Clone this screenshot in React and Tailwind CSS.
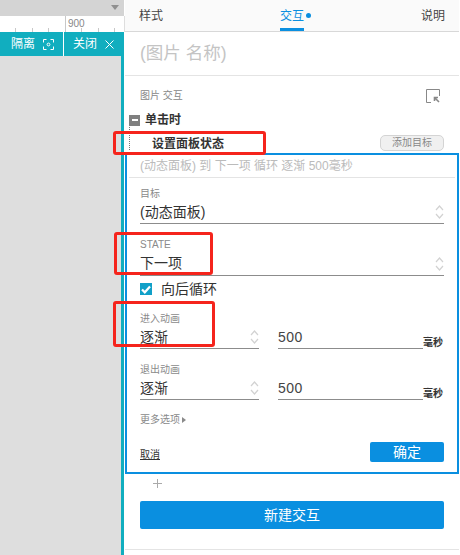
const Updown = ({ className = "" }) => (
  <svg width="9" height="16" viewBox="0 0 9 16" className={className} fill="none" stroke="#d2d2d2" strokeWidth="1.2">
    <path d="M1 6l3.5-4L8 6" />
    <path d="M1 10l3.5 4L8 10" />
  </svg>
);
const Label = ({ children, className = "" }) => (
  <div className={`text-[10px] leading-[14px] text-[#8a8a8a] ${className}`}>{children}</div>
);
const Select = ({ children, className = "", h = "h-[24px]" }) => (
  <div className={`${h} flex items-center justify-between border-b border-[#8c8c8c] text-[14px] text-[#333] ${className}`}>
    <span>{children}</span>
    <Updown />
  </div>
);
const AnimRow = () => (
  <div className="flex items-end">
    <Select className="w-[119px]" h="h-[23px]">逐渐</Select>
    <div className="w-[145px] ml-[19px] h-[23px] border-b border-[#8c8c8c] text-[14px] leading-[22px] text-[#444] tracking-[0.5px]">500</div>
    <div className="text-[10px] leading-[12px] text-[#333] font-bold whitespace-nowrap">毫秒</div>
  </div>
);
const Tab = ({ children }) => <div className="text-[12px] text-[#444]">{children}</div>;

export default function App() {
  return (
    <div
      className="relative w-[460px] h-[555px] overflow-hidden flex bg-white"
      style={{ fontFamily: '"Liberation Sans", "Noto Sans CJK SC", sans-serif' }}
    >
      {/* canvas side */}
      <div className="w-[125px] shrink-0 flex flex-col bg-[#dedede]">
        <div className="h-[16px] bg-[#d4d4d4] border-r border-white flex justify-end items-start pt-[5px] pr-[5px]">
          <div className="w-0 h-0 border-l-[4px] border-r-[4px] border-t-[5px] border-l-transparent border-r-transparent border-t-[#8f8f8f]"></div>
        </div>
        <div className="h-[16px] bg-white border-r border-[#dedede] relative flex items-end gap-[15.5px] pl-[15px]">
          {Array.from({ length: 7 }).map((_, i) => (
            <div key={i} className={`w-px bg-[#c8c8c8] ${i === 3 ? "h-[16px]" : "h-[4px]"}`}></div>
          ))}
          <span className="absolute left-[68px] top-[2px] text-[10px] leading-[12px] text-[#888]">900</span>
        </div>
        <div className="flex-1 flex">
          <div className="flex-1 flex flex-col">
            <div className="h-[24px] bg-[#11aebf] flex text-white text-[12px]">
              <div className="w-[64px] flex items-center justify-end gap-[8px] pr-[9px] border-r border-white">
                <span>隔离</span>
                <svg width="11" height="11" viewBox="0 0 11 11" fill="none" stroke="white" strokeWidth="1">
                  <path d="M3.5.5h-3v3M7.5.5h3v3M3.5 10.5h-3v-3M7.5 10.5h3v-3" />
                  <circle cx="5.5" cy="5.5" r="1.4" />
                </svg>
              </div>
              <div className="flex-1 flex items-center gap-[8px] pl-[9px]">
                <span>关闭</span>
                <svg width="9" height="9" viewBox="0 0 9 9" stroke="white" strokeWidth="1"><path d="M.5.5l8 8M8.5.5l-8 8" /></svg>
              </div>
            </div>
          </div>
          <div className="w-[3px] bg-[#11aebf]"></div>
          <div className="w-[1px] bg-white"></div>
        </div>
      </div>

      {/* panel */}
      <div className="flex-1 mr-[1px] flex flex-col min-w-0">
        <div className="h-[32px] shrink-0 bg-[#fafafa] border-b border-[#d8d8d8] flex items-center justify-between pl-[14px] pr-[14px]">
          <Tab>样式</Tab>
          <div className="relative h-full flex items-center ml-[7px] gap-[2px]">
            <span className="text-[12px] text-[#0a8fe0]">交互</span>
            <span className="w-[5px] h-[5px] rounded-full bg-[#0a8fe0]"></span>
            <span className="absolute left-0 bottom-0 w-[24px] h-[3px] bg-[#0a8fe0]"></span>
          </div>
          <Tab>说明</Tab>
        </div>
        <div className="h-[44px] shrink-0 border-b border-[#e4e4e4] flex items-center pl-[15px] text-[17.5px] text-[#c4c4c4]">(图片 名称)</div>
        <div className="h-[32px] shrink-0 pt-[7px] flex items-center justify-between pl-[15px] pr-[19px] text-[10px] text-[#888]">
          <span>图片 交互</span>
          <svg width="14" height="14" viewBox="0 0 14 14" fill="none">
            <path d="M5 13.5H.5V.5h13V7" stroke="#888" />
            <path d="M13 13L8.500 8.500M8.500 12V8.500H12" stroke="#888" strokeWidth="1.6" />
          </svg>
        </div>
        <div className="h-[23px] shrink-0 pt-[1px] flex items-center pl-[4px] gap-[5px] text-[12px] font-bold text-[#333]">
          <span className="w-[11px] h-[11px] bg-[#808080] flex items-center justify-center">
            <span className="w-[6px] h-[2px] bg-white"></span>
          </span>
          <span>单击时</span>
        </div>
        <div className="h-[22px] shrink-0 pt-[4px] flex items-center justify-between pl-[27px] pr-[15px] relative">
          <span className="absolute left-[4px] -top-[4px] bottom-[3px] border-l border-dotted border-[#777]"></span>
          <span className="text-[12px] font-bold text-[#333]">设置面板状态</span>
          <span className="w-[64px] h-[16px] -mt-[2px] rounded-[5px] border border-[#d4d4d4] bg-[#f0f0f0] text-[10px] leading-[14px] text-[#888] text-center">添加目标</span>
        </div>

        <div className="h-[321px] shrink-0 border-2 border-[#0a8fe0] flex flex-col">
          <div className="h-[23px] shrink-0 mx-[2px] pl-[11px] border-b border-[#e4e4e4] flex items-center text-[12px] text-[#bbb] whitespace-nowrap">
            (动态面板) 到 下一项 循环 逐渐 500毫秒
          </div>
          <div className="flex-1 pl-[13px] pr-[13px] flex flex-col">
            <Label className="mt-[9px]">目标</Label>
            <Select h="h-[23px]">(动态面板)</Select>
            <Label className="mt-[14px]">STATE</Label>
            <Select>下一项</Select>
            <div className="h-[26px] flex items-center gap-[9px] text-[14px] text-[#333]">
              <span className="w-[12px] h-[12px] bg-[#11a0c8] flex items-center justify-center">
                <svg width="10" height="9" viewBox="0 0 10 9" fill="none" stroke="white" strokeWidth="2.2"><path d="M1 4.500l2.800 2.800L9 1.500" /></svg>
              </span>
              <span>向后循环</span>
            </div>
            <Label className="mt-[10px]">进入动画</Label>
            <AnimRow />
            <Label className="mt-[14px]">退出动画</Label>
            <AnimRow />
            <div className="mt-[13px] flex items-center gap-[2px] text-[10px] leading-[14px] text-[#8a8a8a]">
              <span>更多选项</span>
              <span className="w-0 h-0 border-y-[3px] border-l-[4px] border-y-transparent border-l-[#8a8a8a]"></span>
            </div>
            <div className="mt-[15px] flex items-center justify-between">
              <span className="text-[10px] underline text-[#333] mt-[4px]">取消</span>
              <span className="w-[74px] h-[20px] rounded-[2px] bg-[#0a8fe0] text-white text-[14px] leading-[20px] text-center">确定</span>
            </div>
          </div>
        </div>

        <div className="pl-[28px] h-[18px] flex items-center">
          <svg width="9" height="9" viewBox="0 0 9 9" stroke="#aaa"><path d="M4.500 0v9M0 4.500h9" /></svg>
        </div>
        <div className="mx-[15px] mt-[9px] h-[28px] rounded-[2px] bg-[#0a8fe0] text-white text-[14px] flex items-center justify-center">新建交互</div>
        <div className="mt-[20px] border-t border-[#e4e4e4]"></div>
      </div>

      {/* red annotations */}
      <div className="absolute left-[113px] top-[131px] w-[153px] h-[24px] rounded-[3px] border-[3px] border-[#f5241c]"></div>
      <div className="absolute left-[114px] top-[232px] w-[99px] h-[43px] rounded-[3px] border-[3px] border-[#f5241c]"></div>
      <div className="absolute left-[113px] top-[301px] w-[102px] h-[46px] rounded-[3px] border-[3px] border-[#f5241c]"></div>
    </div>
  );
}
